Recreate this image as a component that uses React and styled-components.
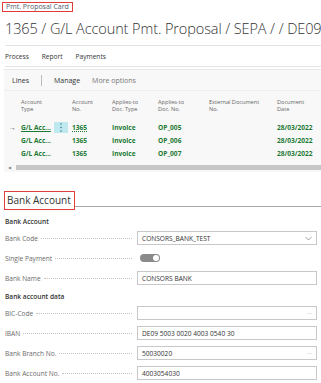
import React from 'react'
import styled, { createGlobalStyle } from 'styled-components'

const Global = createGlobalStyle`
  body {
    margin: 0;
    background: #fff;
    font-family: "Open Sans", "Noto Sans", sans-serif;
    color: #212121;
    overflow: hidden;
  }
`

const Page = styled.div`
  width: 321px;
  height: 383px;
  overflow: hidden;
  padding-top: 2px;
  box-sizing: border-box;
`

const Caption = styled.div`
  width: fit-content;
  margin-left: 2px;
  padding: 0 3px;
  border: 1.5px solid #e23b3b;
  font-size: 7px;
  line-height: 8px;
  color: #505c6d;
`

const Title = styled.h1`
  margin: 7px 0 0 5px;
  font-size: 14.5px;
  font-weight: 300;
  line-height: 20px;
  white-space: nowrap;
  color: #333;
  letter-spacing: -0.1px;
`

const ActionBar = styled.div`
  margin: 6px 0 0 5px;
  border-top: 1px solid #e3e3e3;
  border-bottom: 1px solid #e3e3e3;
  height: 20px;
  display: flex;
  align-items: center;
  gap: 13px;
  font-size: 6.6px;
  color: #333;
`

const LinesPart = styled.div`
  margin: 2px 0 0 4px;
  background: #f8f8f8;
  border-top: 1px solid #e8e8e8;
`

const LinesHeader = styled.div`
  display: flex;
  align-items: center;
  height: 20px;
  padding-left: 8px;
  font-size: 7px;
  color: #333;
  border-bottom: 1px solid #eee;
`

const Tab = styled.span`
  color: ${p => (p.muted ? '#777' : '#333')};
  margin-right: ${p => p.gap || 0}px;
`

const Sep = styled.span`
  width: 1px;
  height: 11px;
  background: #bbb;
  margin: 0 12px;
`

const cols = '17px 33px 18px 40px 46px 51px 68px 1fr'

const HeadRow = styled.div`
  display: grid;
  grid-template-columns: ${cols};
  padding-top: 8px;
  height: 30px;
  box-sizing: border-box;
  font-size: 5.6px;
  line-height: 7px;
  color: #666;
`

const Row = styled.div`
  display: grid;
  grid-template-columns: ${cols};
  height: 13px;
  align-items: center;
  font-size: 6.6px;
  font-weight: 700;
  color: #1d7a35;
  white-space: nowrap;
`

const Cell = styled.span`
  text-decoration: ${p => (p.link ? 'underline' : p.dotted ? 'underline dotted' : 'none')};
`

const Arrow = styled.span`
  color: #555;
  font-weight: 400;
  font-size: 7px;
  padding-left: 5px;
`

const Dots = styled.span`
  height: 11px;
  width: 14px;
  background: ${p => (p.show ? '#bfe8ef' : 'transparent')};
  display: flex;
  align-items: center;
  justify-content: center;
`

const ScrollRow = styled.div`
  display: flex;
  align-items: center;
  height: 10px;
  padding-left: 4px;
  margin-top: 2px;
`

const ScrollArrow = styled.span`
  font-size: 4px;
  color: #888;
  width: 8px;
`

const Thumb = styled.div`
  flex: 1;
  height: 5px;
  background: #c6c6c6;
`

const SectionHead = styled.div`
  margin: 19px 0 0 4px;
  display: flex;
  align-items: flex-end;
`

const SectionTitle = styled.div`
  border: 1.5px solid #e23b3b;
  padding: 2px 3px 2px 2px;
  font-size: 10px;
  line-height: 13px;
  color: #333;
  white-space: nowrap;
`

const SectionLine = styled.div`
  flex: 1;
  height: 1px;
  background: #a8a8a8;
  margin-bottom: 3px;
`

const Group = styled.div`
  margin: ${p => p.top}px 0 0 5px;
  font-size: 6.6px;
  font-weight: 600;
  color: #333;
  height: 12px;
  line-height: 12px;
`

const Field = styled.div`
  display: grid;
  grid-template-columns: 132px 180px;
  height: 20px;
  align-items: center;
  margin-left: 5px;
`

const Label = styled.div`
  display: flex;
  align-items: center;
  font-size: 6.6px;
  color: #6a6a6a;
  white-space: nowrap;
  overflow: hidden;
  &::after {
    content: '';
    flex: 1;
    margin: 1px 5px 0 3px;
    border-bottom: 1px dotted #c4c4c4;
  }
`

const Input = styled.div`
  height: 14px;
  box-sizing: border-box;
  border: 1px solid #c8c8c8;
  background: #fff;
  display: flex;
  align-items: center;
  padding: 0 4px;
  font-size: 6.6px;
  color: #333;
`

const Value = styled.span`
  flex: 1;
`

const Trail = styled.span`
  color: #999;
  font-size: 6px;
`

const Toggle = styled.div`
  width: 20px;
  height: 8px;
  border-radius: 4px;
  background: #8a8a8a;
  margin-left: 3px;
  position: relative;
  &::after {
    content: '';
    position: absolute;
    right: 1px;
    top: 1px;
    width: 6px;
    height: 6px;
    border-radius: 50%;
    background: #fff;
  }
`

const Chevron = () => (
  <svg width="7" height="5" viewBox="0 0 7 5">
    <path d="M0.5 1 L3.5 4 L6.5 1" fill="none" stroke="#888" strokeWidth="0.8" />
  </svg>
)

const VDots = () => (
  <svg width="2" height="9" viewBox="0 0 2 9">
    <circle cx="1" cy="1" r="0.8" fill="#2f7f9a" />
    <circle cx="1" cy="4.5" r="0.8" fill="#2f7f9a" />
    <circle cx="1" cy="8" r="0.8" fill="#2f7f9a" />
  </svg>
)

const rows = [
  { doc: 'OP_005', current: true },
  { doc: 'OP_006' },
  { doc: 'OP_007' },
]

export default function App() {
  return (
    <Page>
      <Global />
      <Caption>Pmt. Proposal Card</Caption>
      <Title>1365 / G/L Account Pmt. Proposal / SEPA / / DE09 5003 0020 4003 0540 30</Title>
      <ActionBar>
        <span>Process</span>
        <span>Report</span>
        <span>Payments</span>
      </ActionBar>
      <LinesPart>
        <LinesHeader>
          <Tab>Lines</Tab>
          <Sep />
          <Tab gap={12}>Manage</Tab>
          <Tab muted>More options</Tab>
        </LinesHeader>
        <HeadRow>
          <span />
          <span>Account<br />Type</span>
          <span />
          <span>Account<br />No.</span>
          <span>Applies-to<br />Doc. Type</span>
          <span>Applies-to<br />Doc. No.</span>
          <span>External Document<br />No.</span>
          <span>Document<br />Date</span>
        </HeadRow>
        {rows.map(r => (
          <Row key={r.doc}>
            <Arrow>{r.current ? '→' : ''}</Arrow>
            <Cell link={r.current}>G/L Acc...</Cell>
            <Dots show={r.current}>{r.current && <VDots />}</Dots>
            <Cell dotted={r.current}>1365</Cell>
            <Cell>Invoice</Cell>
            <Cell>{r.doc}</Cell>
            <Cell />
            <Cell>28/03/2022</Cell>
          </Row>
        ))}
        <ScrollRow>
          <ScrollArrow>◀</ScrollArrow>
          <Thumb />
        </ScrollRow>
      </LinesPart>
      <SectionHead>
        <SectionTitle>Bank Account</SectionTitle>
        <SectionLine />
      </SectionHead>
      <Group top={6}>Bank Account</Group>
      <Field>
        <Label>Bank Code</Label>
        <Input><Value>CONSORS_BANK_TEST</Value><Chevron /></Input>
      </Field>
      <Field>
        <Label>Single Payment</Label>
        <Toggle />
      </Field>
      <Field>
        <Label>Bank Name</Label>
        <Input><Value>CONSORS BANK</Value></Input>
      </Field>
      <Group top={3}>Bank account data</Group>
      <Field>
        <Label>BIC-Code</Label>
        <Input><Value /><Trail>···</Trail></Input>
      </Field>
      <Field>
        <Label>IBAN</Label>
        <Input><Value>DE09 5003 0020 4003 0540 30</Value></Input>
      </Field>
      <Field>
        <Label>Bank Branch No.</Label>
        <Input><Value>50030020</Value><Trail>···</Trail></Input>
      </Field>
      <Field>
        <Label>Bank Account No.</Label>
        <Input><Value>4003054030</Value></Input>
      </Field>
    </Page>
  )
}
